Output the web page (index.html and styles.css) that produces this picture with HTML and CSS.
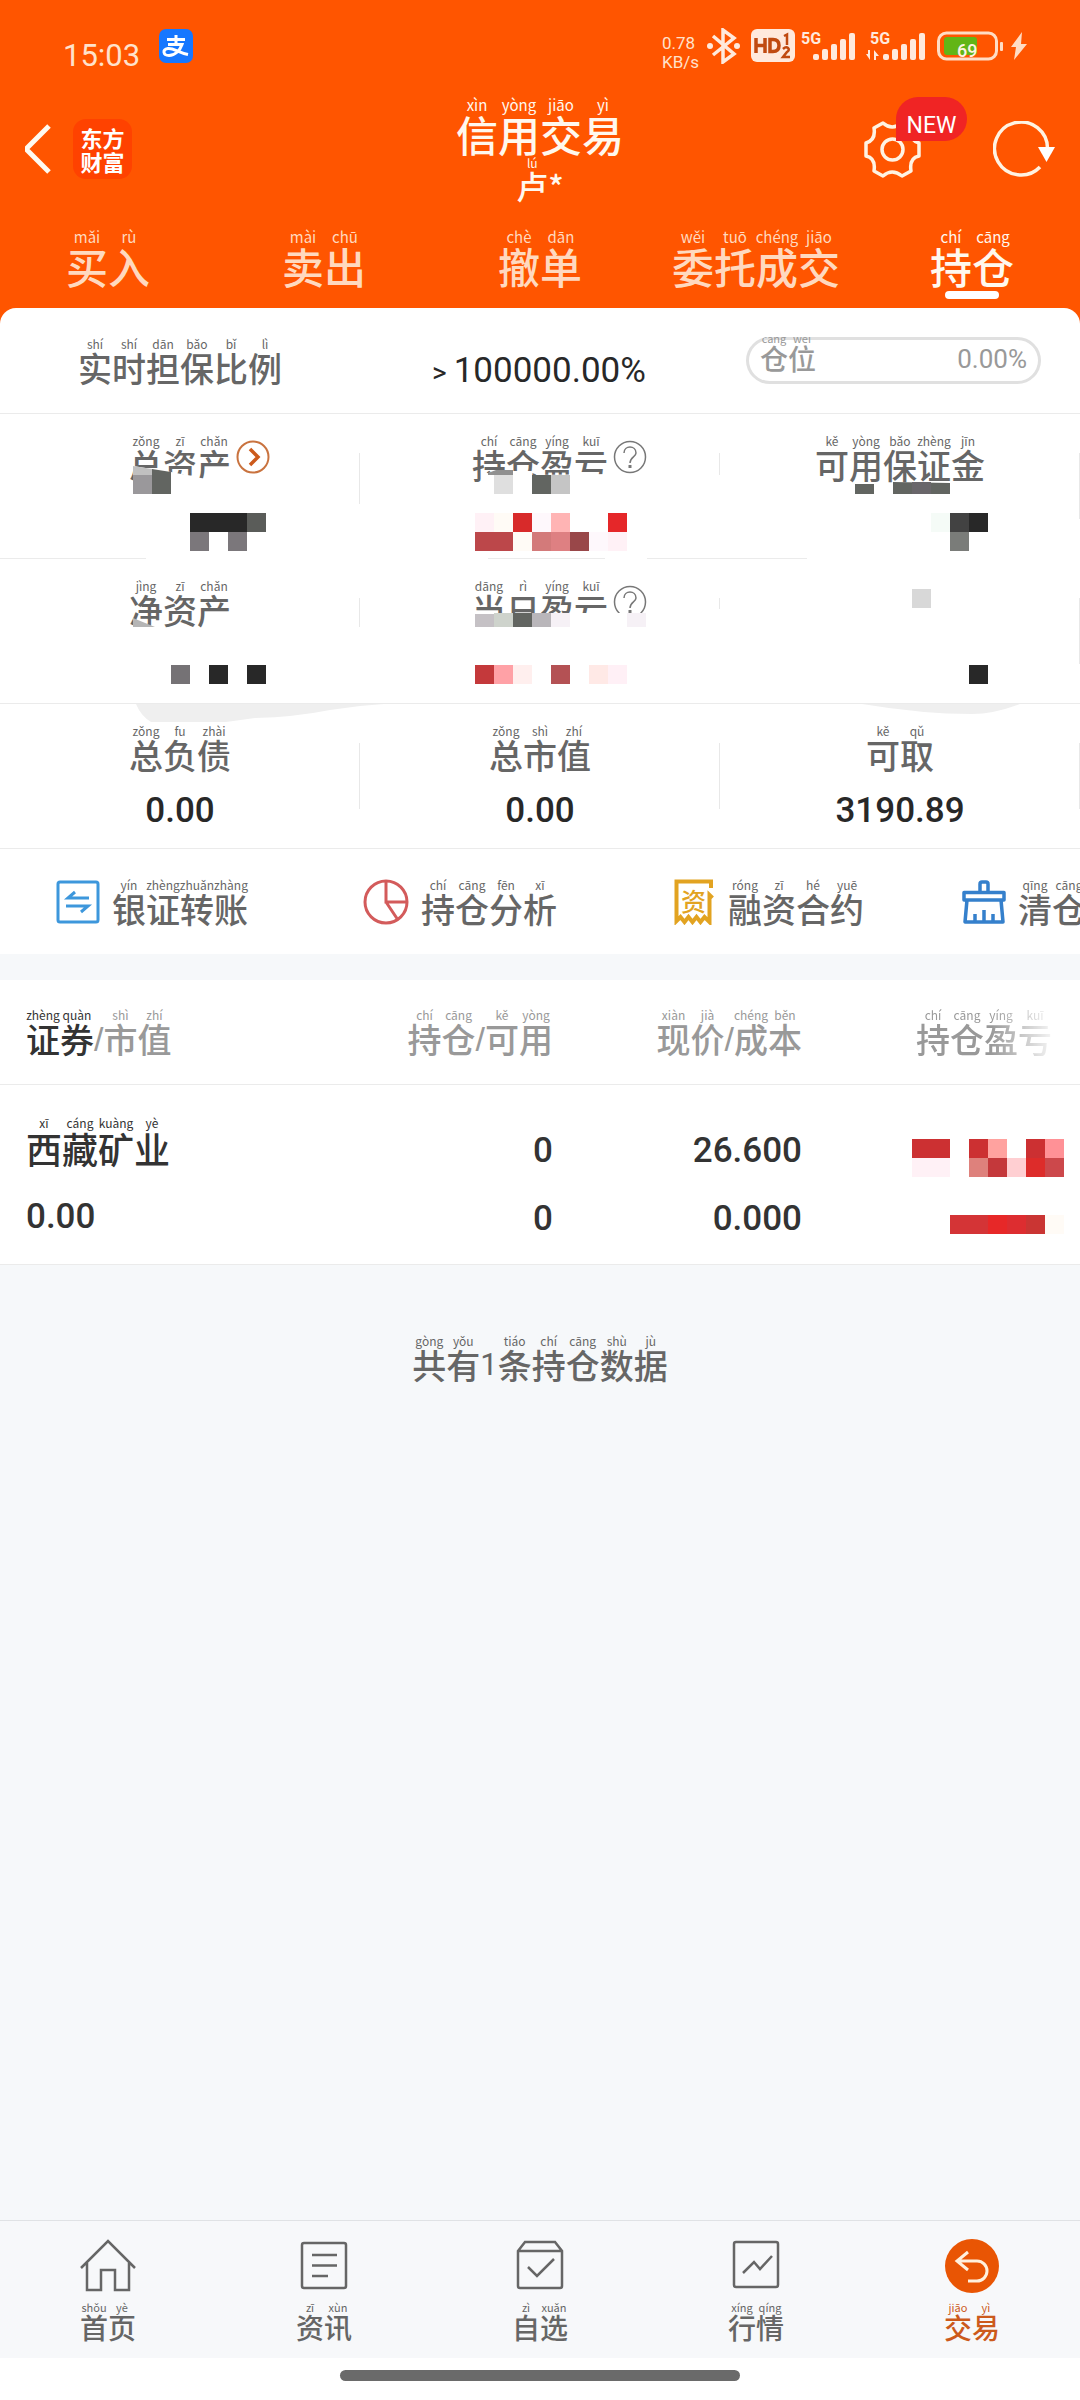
FILE: index.html
```html
<!DOCTYPE html>
<html lang="zh-CN">
<head>
<meta charset="utf-8">
<meta name="viewport" content="width=device-width, initial-scale=1">
<title>信用交易</title>
<link rel="stylesheet" href="styles.css">
</head>
<body>
<header class="top">
  <div class="status">
    <span class="clock">15:03</span>
    <svg class="alipay" width="34" height="34" viewBox="0 0 34 34"><rect width="34" height="34" rx="7" fill="#1677ff"/><g fill="none" stroke="#fff" stroke-width="3"><path d="M8 10.500h18M17 6v9M9 15.500h14c-2 6-7 11-13 11-6 0-7-6-1-7 6-.5 10 4 20 6"/></g></svg>
    <div class="status-icons">
      <span class="speed">0.78<br>KB/s</span>
      <svg width="39" height="36" viewBox="0 0 39 36"><g fill="none" stroke="#ffe9dc" stroke-width="3.500"><path d="M6 8l21 18-11 8V2l11 8L6 27"/></g><circle cx="3" cy="18" r="3" fill="#ffe9dc"/><circle cx="30" cy="18" r="3" fill="#ffe9dc"/></svg>
      <svg width="45" height="34" viewBox="0 0 45 34"><rect width="44" height="33" rx="6" fill="#ffe9dc"/><g fill="none" stroke="#c04a10" stroke-width="3.500"><path d="M5 9v15M14 9v15M5 16.500h9M19 10.500h3q6 0 6 6t-6 6h-3z"/></g><g fill="none" stroke="#c04a10" stroke-width="2.500"><path d="M33 7l3-1.500V16M32 20q3-3 5-1t-1 4l-4 5h7"/></g></svg>
      <svg width="60" height="32" viewBox="0 0 60 32" fill="#ffe9dc"><text x="0" y="14" class="net">5G</text><rect x="12" y="24" width="6" height="6" rx="2"/><rect x="21" y="19" width="6" height="11" rx="2"/><rect x="30" y="14" width="6" height="16" rx="2"/><rect x="39" y="9" width="6" height="21" rx="2"/><rect x="48" y="3" width="6" height="27" rx="2"/></svg>
      <svg width="66" height="32" viewBox="0 0 66 32" fill="#ffe9dc"><text x="4" y="14" class="net">5G</text><path d="M4 20v10L0 24h2v-4zM8 30V20l5 6h-3v4z"/><rect x="17" y="24" width="6" height="6" rx="2"/><rect x="26" y="19" width="6" height="11" rx="2"/><rect x="35" y="14" width="6" height="16" rx="2"/><rect x="44" y="9" width="6" height="21" rx="2"/><rect x="53" y="3" width="6" height="27" rx="2"/></svg>
      <svg width="68" height="30" viewBox="0 0 68 30"><rect x="1.500" y="2" width="58" height="26" rx="8" fill="none" stroke="#ffdcc4" stroke-width="3"/><rect x="7" y="6" width="33" height="18" rx="3" fill="#62b516"/><rect x="63" y="11" width="3" height="9" rx="1" fill="#ffdcc4"/><text x="20" y="26" class="charge">69</text></svg>
      <svg width="17" height="30" viewBox="0 0 17 30"><path d="M12 1L1 16h5L4 29l13-16h-6z" fill="#ffdcc4"/></svg>
    </div>
  </div>
  <div class="nav">
    <div class="nav-left">
      <button class="icon-btn" aria-label="返回"><svg width="27" height="50" viewBox="0 0 27 50"><path d="M24 2L1 25l23 23" fill="none" stroke="#fffaf0" stroke-width="5"/></svg></button>
      <span class="logo">东方<br>财富</span>
    </div>
    <div class="nav-title">
      <h1 class="py big">
        <ruby>信<rt>xìn</rt></ruby><ruby>用<rt>yòng</rt></ruby><ruby>交<rt>jiāo</rt></ruby><ruby>易<rt>yì</rt></ruby>
      </h1>
      <div class="py account"><ruby>卢<rt>lú</rt></ruby><span>*</span></div>
    </div>
    <div class="nav-right">
      <button class="icon-btn gear" aria-label="设置">
        <svg width="57" height="57" viewBox="0 0 57 57" fill="none" stroke="#fff3e2" stroke-width="3.500"><path d="M19 2Q28 10 38 2L47 7Q45 19 55 22V35Q45 37 47 50L38 55Q28 47 19 55L10 50Q12 37 2 35V22Q12 19 10 7Z" stroke-linejoin="round"/><circle cx="28.500" cy="28.500" r="10.500"/></svg>
        <span class="new">NEW</span>
      </button>
      <button class="icon-btn" aria-label="刷新"><svg width="62" height="57" viewBox="0 0 62 57"><path d="M54.500 28A26.500 26.500 0 1 0 47 46" fill="none" stroke="#fff3e2" stroke-width="3.500"/><path d="M45 26h17l-8.500 15z" fill="#fff"/></svg></button>
    </div>
  </div>
  <nav class="tabs">
    <a href="#buy" class="py big"><ruby>买<rt>mǎi</rt></ruby><ruby>入<rt>rù</rt></ruby></a>
    <a href="#sell" class="py big"><ruby>卖<rt>mài</rt></ruby><ruby>出<rt>chū</rt></ruby></a>
    <a href="#cancel" class="py big"><ruby>撤<rt>chè</rt></ruby><ruby>单<rt>dān</rt></ruby></a>
    <a href="#orders" class="py big"><ruby>委<rt>wěi</rt></ruby><ruby>托<rt>tuō</rt></ruby><ruby>成<rt>chéng</rt></ruby><ruby>交<rt>jiāo</rt></ruby></a>
    <a href="#hold" class="py big active"><ruby>持<rt>chí</rt></ruby><ruby>仓<rt>cāng</rt></ruby></a>
  </nav>
</header>

<main class="content">
  <section class="account-card">
    <div class="ratio-row">
      <div class="py"><ruby>实<rt>shí</rt></ruby><ruby>时<rt>shí</rt></ruby><ruby>担<rt>dān</rt></ruby><ruby>保<rt>bǎo</rt></ruby><ruby>比<rt>bǐ</rt></ruby><ruby>例<rt>lì</rt></ruby></div>
      <div class="ratio"><small>&gt;</small>100000.00%</div>
      <div class="pill"><div class="py small"><ruby>仓<rt>cāng</rt></ruby><ruby>位<rt>wèi</rt></ruby></div><span>0.00%</span></div>
    </div>
    <div class="grid">
      <div class="cell">
        <div class="py"><ruby>总<rt>zǒng</rt></ruby><ruby>资<rt>zī</rt></ruby><ruby>产<rt>chǎn</rt></ruby>
          <svg class="hint" width="34" height="34" viewBox="0 0 34 34" fill="none"><circle cx="17" cy="17" r="15.500" stroke="#c9733f" stroke-width="2"/><path d="M14 9l8 8-8 8" stroke="#cc5a1c" stroke-width="3.500"/></svg></div>
        <svg class="mask" viewBox="0 0 360 145" preserveAspectRatio="none"><path fill="#fff" d="M133 52l38 6 35 7v18h-73zM146 143h214v2H146zM356 90h4v18h-4z"/><path fill="#c0c0c0" d="M133 52l19 3v6h-19z"/><path fill="#9a989b" d="M133 61h19v19h-19z"/><path fill="#626561" d="M152 55l19 3v22h-19z"/><path fill="#282828" d="M190 99h57v19h-57z"/><path fill="#5a5c59" d="M247 99h19v19h-19z"/><path fill="#7b777b" d="M190 118h19v19h-19zM228 118h19v19h-19z"/></svg>
      </div>
      <div class="cell">
        <div class="py"><ruby>持<rt>chí</rt></ruby><ruby>仓<rt>cāng</rt></ruby><ruby>盈<rt>yíng</rt></ruby><ruby>亏<rt>kuī</rt></ruby>
          <svg class="hint" width="34" height="34" viewBox="0 0 34 34" fill="none" stroke="#777" stroke-width="1.500"><circle cx="17" cy="17" r="15.500"/><path d="M11 13c0-8 12-8 12 0 0 4-6 4-6 10"/><path d="M17 25v3" stroke-width="3"/></svg></div>
        <svg class="mask" viewBox="0 0 360 145" preserveAspectRatio="none"><path fill="#fff" d="M125 60l10-3h37v4l78-1v22H125zM0 143h128v2H0zM245 143h42v2h-42zM356 61h4v47h-4z"/><path fill="#909090" d="M128 59l8-3h17v5h-25z"/><path fill="#dfdfdf" d="M134 61h19v19h-19z"/><path fill="#626561" d="M172 61h19v19h-19z"/><path fill="#c5c5c5" d="M191 61h19v19h-19z"/><path fill="#fff1f6" d="M115 99h19v19h-19zM248 118h19v19h-19z"/><path fill="#fffbf6" d="M134 99h19v19h-19zM153 118h19v19h-19z"/><path fill="#d82a2a" d="M153 99h19v19h-19z"/><path fill="#fef8fc" d="M172 99h19v19h-19zM229 118h19v19h-19z"/><path fill="#ffb4b4" d="M191 99h19v19h-19z"/><path fill="#e52729" d="M248 99h19v19h-19z"/><path fill="#bc474a" d="M115 118h38v19h-38z"/><path fill="#d37a7a" d="M172 118h19v19h-19z"/><path fill="#de8082" d="M191 118h19v19h-19z"/><path fill="#994749" d="M210 118h19v19h-19z"/></svg>
      </div>
      <div class="cell">
        <div class="py"><ruby>可<rt>kě</rt></ruby><ruby>用<rt>yòng</rt></ruby><ruby>保<rt>bǎo</rt></ruby><ruby>证<rt>zhèng</rt></ruby><ruby>金<rt>jīn</rt></ruby></div>
        <svg class="mask" viewBox="0 0 360 145" preserveAspectRatio="none"><path fill="#fff" d="M87 143h273v2H87z"/><path fill="#626561" d="M135 70h19v10h-19zM173 68l57 1v11h-57z"/><path fill="#69666a" d="M192 68h19v12h-19z"/><path fill="#f5fbf7" d="M211 99h19v19h-19z"/><path fill="#424242" d="M230 99h19v19h-19z"/><path fill="#282828" d="M249 99h19v19h-19z"/><path fill="#7a7c79" d="M230 118h19v19h-19z"/></svg>
      </div>
      <div class="cell">
        <div class="py"><ruby>净<rt>jìng</rt></ruby><ruby>资<rt>zī</rt></ruby><ruby>产<rt>chǎn</rt></ruby></div>
        <svg class="mask" viewBox="0 0 360 145" preserveAspectRatio="none"><path fill="#fff" d="M356 68h4v40h-4z"/><path fill="#b5b5b5" d="M133 59l22 9h-22z"/><path fill="#757275" d="M171 106h19v19h-19z"/><path fill="#282828" d="M209 106h19v19h-19zM247 106h19v19h-19z"/></svg>
      </div>
      <div class="cell">
        <div class="py"><ruby>当<rt>dāng</rt></ruby><ruby>日<rt>rì</rt></ruby><ruby>盈<rt>yíng</rt></ruby><ruby>亏<rt>kuī</rt></ruby>
          <svg class="hint" width="34" height="34" viewBox="0 0 34 34" fill="none" stroke="#777" stroke-width="1.500"><circle cx="17" cy="17" r="15.500"/><path d="M11 13c0-8 12-8 12 0 0 4-6 4-6 10"/><path d="M17 25v3" stroke-width="3"/></svg></div>
        <svg class="mask" viewBox="0 0 360 145" preserveAspectRatio="none"><path fill="#fff" d="M105 54h190v20H105zM356 50h4v58h-4z"/><path fill="#c5c1c5" d="M115 55h19v13h-19z"/><path fill="#ced3cc" d="M134 54h19v14h-19z"/><path fill="#626561" d="M153 54h19v14h-19z"/><path fill="#b9b6ba" d="M172 54h19v14h-19z"/><path fill="#f6f1f6" d="M191 54h19v14h-19zM267 54h19v14h-19z"/><path fill="#c4393b" d="M115 106h19v19h-19z"/><path fill="#ffa1a6" d="M134 106h19v19h-19z"/><path fill="#ffefee" d="M153 106h19v19h-19z"/><path fill="#b45154" d="M191 106h19v19h-19z"/><path fill="#ffe9e6" d="M229 106h19v19h-19z"/><path fill="#fff0f6" d="M248 106h19v19h-19z"/></svg>
      </div>
      <div class="cell">
        <svg class="mask" viewBox="0 0 360 145" preserveAspectRatio="none"><path fill="#d8d8d8" d="M192 30h19v19h-19z"/><path fill="#282828" d="M249 106h19v19h-19z"/></svg>
      </div>
      <div class="cell">
        <svg class="mask" viewBox="0 0 360 145" preserveAspectRatio="none"><path fill="#efefef" d="M136 0q5 12 15 18h75l29-4q40-1 75-8l30-4V0z"/></svg>
        <div class="py"><ruby>总<rt>zǒng</rt></ruby><ruby>负<rt>fu</rt></ruby><ruby>债<rt>zhài</rt></ruby></div>
        <strong>0.00</strong>
      </div>
      <div class="cell">
        <svg class="mask" viewBox="0 0 360 145" preserveAspectRatio="none"><path fill="#efefef" d="M0 0h24L0 2z"/></svg>
        <div class="py"><ruby>总<rt>zǒng</rt></ruby><ruby>市<rt>shì</rt></ruby><ruby>值<rt>zhí</rt></ruby></div>
        <strong>0.00</strong>
      </div>
      <div class="cell">
        <svg class="mask" viewBox="0 0 360 145" preserveAspectRatio="none"><path fill="#efefef" d="M142 0q60 10 110 10 22 0 48-10z"/></svg>
        <div class="py"><ruby>可<rt>kě</rt></ruby><ruby>取<rt>qǔ</rt></ruby></div>
        <strong>3190.89</strong>
      </div>
    </div>
    <nav class="tools">
      <a href="#transfer"><svg width="44" height="46" viewBox="0 0 44 46" fill="none" stroke="#3d97dc" stroke-width="3"><rect x="2" y="3" width="40" height="40" rx="2"/><path d="M33 19H12l7-6M10 27h22l-7 6"/></svg>
        <span class="py"><ruby>银<rt>yín</rt></ruby><ruby>证<rt>zhèng</rt></ruby><ruby>转<rt>zhuǎn</rt></ruby><ruby>账<rt>zhàng</rt></ruby></span></a>
      <a href="#analysis"><svg width="46" height="46" viewBox="0 0 46 46" fill="none" stroke="#d35b5b" stroke-width="3"><circle cx="23" cy="23" r="21"/><path d="M23 2v21h21M23 23l12 18"/></svg>
        <span class="py"><ruby>持<rt>chí</rt></ruby><ruby>仓<rt>cāng</rt></ruby><ruby>分<rt>fēn</rt></ruby><ruby>析<rt>xī</rt></ruby></span></a>
      <a href="#contract"><svg width="44" height="46" viewBox="0 0 44 46"><path d="M39 9V2.500H4.500V42l4-4 4 5 4-5 4 5 4-5 4 5 4-5 5 5V16l3 3" fill="none" stroke="#e2a321" stroke-width="4"/><text x="9" y="32" class="doc">资</text></svg>
        <span class="py"><ruby>融<rt>róng</rt></ruby><ruby>资<rt>zī</rt></ruby><ruby>合<rt>hé</rt></ruby><ruby>约<rt>yuē</rt></ruby></span></a>
      <a href="#cleared" class="last"><svg width="44" height="46" viewBox="0 0 44 46" fill="none" stroke="#3580cc" stroke-width="3.500"><path d="M18 13V5q0-2 2-2h4q2 0 2 2v8M2 13.500h40V21H2zM5 21L3 43h38l-2-22M13 43v-8M22 43V31M31 43v-8" stroke-linejoin="round"/></svg>
        <span class="py"><ruby>清<rt>qīng</rt></ruby><ruby>仓<rt>cāng</rt></ruby></span></a>
    </nav>
  </section>

  <table class="holdings">
    <colgroup><col><col class="c2"><col class="c3"><col class="c4"></colgroup>
    <thead>
      <tr>
        <th><span class="py"><b><ruby>证<rt>zhèng</rt></ruby><ruby>券<rt>quàn</rt></ruby></b><i>/</i><ruby>市<rt>shì</rt></ruby><ruby>值<rt>zhí</rt></ruby></span></th>
        <th><span class="py"><ruby>持<rt>chí</rt></ruby><ruby>仓<rt>cāng</rt></ruby><i>/</i><ruby>可<rt>kě</rt></ruby><ruby>用<rt>yòng</rt></ruby></span></th>
        <th><span class="py"><ruby>现<rt>xiàn</rt></ruby><ruby>价<rt>jià</rt></ruby><i>/</i><ruby>成<rt>chéng</rt></ruby><ruby>本<rt>běn</rt></ruby></span></th>
        <th><span class="py fade"><ruby>持<rt>chí</rt></ruby><ruby>仓<rt>cāng</rt></ruby><ruby>盈<rt>yíng</rt></ruby><ruby>亏<rt>kuī</rt></ruby></span></th>
      </tr>
    </thead>
    <tbody>
      <tr>
        <td><div class="py name"><ruby>西<rt>xī</rt></ruby><ruby>藏<rt>cáng</rt></ruby><ruby>矿<rt>kuàng</rt></ruby><ruby>业<rt>yè</rt></ruby></div><div class="num">0.00</div></td>
        <td><div class="num">0</div><div class="num">0</div></td>
        <td><div class="num">26.600</div><div class="num">0.000</div></td>
        <td><svg class="profit" width="152" height="96" viewBox="0 0 152 96"><path fill="#cc3032" d="M0 0h38v19H0zM57 0h19v19H57zM114 0h19v19h-19z"/><path fill="#ffa29f" d="M76 0h19v19H76z"/><path fill="#ff9196" d="M133 0h19v19h-19z"/><path fill="#fff1f6" d="M0 19h38v19H0z"/><path fill="#de817c" d="M57 19h19v19H57z"/><path fill="#c4383b" d="M76 19h19v19H76z"/><path fill="#ffcfd2" d="M95 19h19v19H95z"/><path fill="#dd2c2a" d="M114 19h19v19h-19z"/><path fill="#cc484b" d="M133 19h19v19h-19z"/><path fill="#d43436" d="M38 76h38v19H38z"/><path fill="#e72828" d="M76 76h19v19H76z"/><path fill="#dd2d30" d="M95 76h19v19H95z"/><path fill="#ca3533" d="M114 76h19v19h-19z"/><path fill="#fffbf6" d="M133 76h19v19h-19z"/></svg></td>
      </tr>
    </tbody>
  </table>
  <p class="py total"><ruby>共<rt>gòng</rt></ruby><ruby>有<rt>yǒu</rt></ruby><span>1</span><ruby>条<rt>tiáo</rt></ruby><ruby>持<rt>chí</rt></ruby><ruby>仓<rt>cāng</rt></ruby><ruby>数<rt>shù</rt></ruby><ruby>据<rt>jù</rt></ruby></p>
</main>

<nav class="tabbar">
  <a href="#home"><svg width="56" height="56" viewBox="0 0 56 56" fill="none" stroke="#666" stroke-width="2.500"><path d="M1 30L28 3l27 27M7 25v27h14V32h14v20h14V25"/></svg><span class="py small"><ruby>首<rt>shǒu</rt></ruby><ruby>页<rt>yè</rt></ruby></span></a>
  <a href="#news"><svg width="56" height="56" viewBox="0 0 56 56" fill="none" stroke="#666" stroke-width="2.500"><rect x="6" y="5" width="44" height="45" rx="2"/><path d="M16 17h25M16 27.500h25M16 38h16"/></svg><span class="py small"><ruby>资<rt>zī</rt></ruby><ruby>讯<rt>xùn</rt></ruby></span></a>
  <a href="#watch"><svg width="56" height="56" viewBox="0 0 56 56" fill="none" stroke="#666" stroke-width="2.500"><path d="M6 13l7-9h30l7 9v35q0 2-2 2H8q-2 0-2-2zM6 13h44M16 29l9 9 17-17"/></svg><span class="py small"><ruby>自<rt>zì</rt></ruby><ruby>选<rt>xuǎn</rt></ruby></span></a>
  <a href="#market"><svg width="56" height="56" viewBox="0 0 56 56" fill="none" stroke="#666" stroke-width="2.500"><rect x="6" y="4" width="44" height="45" rx="2"/><path d="M15 35l11-11 6 7 12-13"/></svg><span class="py small"><ruby>行<rt>xíng</rt></ruby><ruby>情<rt>qíng</rt></ruby></span></a>
  <a href="#trade" class="active"><svg width="56" height="56" viewBox="0 0 56 56" fill="none"><circle cx="28" cy="28" r="27" fill="#e95504"/><path d="M24 14l-11 9 11 9M13 23h20a10 10 0 0 1 0 20h-9" stroke="#fff0dc" stroke-width="3"/></svg><span class="py small"><ruby>交<rt>jiāo</rt></ruby><ruby>易<rt>yì</rt></ruby></span></a>
</nav>
<footer class="gesture"><span></span></footer>
</body>
</html>
```
FILE: styles.css
```css
* { box-sizing: border-box; }

body {
  margin: 0;
  min-height: 100vh;
  display: flex;
  flex-direction: column;
  background: #f6f8fa;
  color: #666;
  font-family: Roboto, "Noto Sans CJK SC", sans-serif;
  overflow-x: hidden;
}

a { color: inherit; text-decoration: none; }

/* Characters with pinyin above */
.py {
  display: inline-flex;
  align-items: flex-end;
  font-family: "Noto Sans CJK SC", sans-serif;
  font-size: 34px;
  line-height: 34px;
  font-weight: 500;
  margin: 0;
  white-space: nowrap;
}
.py b { display: inline-flex; color: #333; font-weight: 500; }
.py i { font-style: normal; font-family: "Liberation Sans", sans-serif; }
.py ruby {
  display: inline-flex;
  flex-direction: column-reverse;
  align-items: center;
  width: 1em;
}
.py rt {
  display: block;
  font-size: 12px;
  line-height: 14px;
  font-weight: 400;
}
.py.big { font-size: 42px; line-height: 42px; }
.py.big rt { font-size: 15px; line-height: 16px; }
.py.small { font-size: 28px; line-height: 28px; }
.py.small rt { font-size: 11px; line-height: 12px; }

/* Header */
.top { background: #ff5500; color: #fff8ee; padding-bottom: 25px; }

.status {
  height: 92px;
  padding: 0 53px 0 63px;
  display: flex;
  align-items: center;
}
.clock { font-size: 31px; line-height: 31px; margin: 18px 19px 0 0; color: #ffe2cc; }
.status-icons { margin-left: auto; display: flex; align-items: center; gap: 5px; }
.speed { width: 40px; font-size: 17px; line-height: 19px; color: #ffe2cc; padding-top: 14px; }
.net { font: 700 16px Roboto, sans-serif; }
.charge { font: 500 18px Roboto, sans-serif; fill: #fff3e0; }

.nav {
  display: grid;
  grid-template-columns: 1fr auto 1fr;
  align-items: center;
  padding: 5px 25px 0;
}
.nav-left { display: flex; align-items: center; gap: 21px; }
.nav-right { display: flex; justify-content: flex-end; gap: 72px; }
.nav-title { display: flex; flex-direction: column; align-items: center; gap: 2px; }
.account { font-size: 32px; line-height: 32px; }
.account rt { line-height: 12px; }
.icon-btn { position: relative; display: block; padding: 0; border: 0; background: none; font: inherit; }
.icon-btn svg { display: block; }
.logo {
  width: 59px;
  height: 60px;
  padding: 6px 0;
  border-radius: 13px;
  background: #ff4200;
  color: #fff;
  text-align: center;
  font: 700 22px/24px "Noto Sans CJK SC", sans-serif;
}
.new {
  position: absolute;
  left: 32px;
  top: -24px;
  width: 71px;
  height: 44px;
  padding-top: 8px;
  border-radius: 22px 22px 22px 0;
  background: #f02424;
  color: #fff;
  font-size: 23px;
  line-height: 42px;
}

.tabs { display: grid; grid-template-columns: repeat(5, 1fr); padding-top: 28px; }
.tabs a { justify-content: center; color: #ffd9bf; padding-bottom: 12px; position: relative; }
.tabs .active { color: #fff8ee; }
.tabs .active::after {
  content: "";
  position: absolute;
  bottom: 0;
  width: 54px;
  height: 8px;
  border-radius: 4px;
  background: #fff;
}

/* Account figures */
.content { flex: 1; display: flex; flex-direction: column; }
.account-card { margin-top: -16px; border-radius: 16px 16px 0 0; background: #fff; }
.ratio-row {
  height: 106px;
  padding: 29px 39px 0 78px;
  display: flex;
  align-items: flex-start;
  border-bottom: 1px solid #ebebeb;
}
.ratio {
  margin: 16px 0 0 150px;
  display: flex;
  align-items: baseline;
  gap: 7px;
  color: #282828;
  font-size: 35px;
  line-height: 36px;
}
.ratio small { font-size: 28px; }
.pill {
  margin-left: auto;
  width: 295px;
  height: 47px;
  padding: 0 14px 12px;
  display: flex;
  justify-content: space-between;
  align-items: flex-end;
  overflow: hidden;
  border-radius: 24px;
  box-shadow: inset 0 0 0 3px #e0e0e0;
  color: #999;
  font-size: 26px;
  line-height: 26px;
}

.grid { display: grid; grid-template-columns: repeat(3, 1fr); }
.cell {
  position: relative;
  height: 145px;
  padding-top: 20px;
  display: flex;
  flex-direction: column;
  align-items: center;
  gap: 21px;
  border-bottom: 1px solid #ebebeb;
}
.cell::before {
  content: "";
  position: absolute;
  right: 0;
  top: 39px;
  width: 1px;
  height: 66px;
  background: #e8e8e8;
}
.cell .py { position: relative; }
.cell strong { color: #282828; font-size: 35px; line-height: 36px; font-weight: 500; }
.hint { position: absolute; left: 100%; top: 6px; margin-left: 5px; }
.mask { position: absolute; left: 0; top: 0; width: 100%; height: 145px; }

.tools { display: grid; grid-template-columns: repeat(4, 308px); height: 105px; overflow: hidden; }
.tools a { display: flex; align-items: center; justify-content: center; gap: 12px; padding-right: 4px; }
.tools .last { justify-content: flex-start; padding-left: 38px; }
.doc { font: 500 25px "Noto Sans CJK SC", sans-serif; fill: #e2a321; }

/* Holdings */
.holdings {
  width: 100%;
  margin-top: 26px;
  border-collapse: separate;
  border-spacing: 0;
  table-layout: fixed;
  background: #fff;
}
.c2 { width: 228px; }
.c3 { width: 249px; }
.c4 { width: 278px; }
.holdings th, .holdings td {
  padding: 0;
  text-align: right;
  vertical-align: top;
  border-bottom: 1px solid #ebebeb;
}
.holdings th { padding: 28px 0; line-height: 0; color: #999; font-weight: 400; }
.holdings th:first-child, .holdings td:first-child { padding-left: 26px; text-align: left; }
.holdings th:last-child { padding-right: 28px; }
.holdings td { padding: 48px 0 27px; color: #333; }
.holdings td:first-child { padding-top: 31px; }
.fade { -webkit-mask-image: linear-gradient(90deg, #000 55%, transparent 105%); mask-image: linear-gradient(90deg, #000 55%, transparent 105%); }
.py.name { display: flex; font-size: 36px; line-height: 36px; color: #333; }
.num { font-size: 35px; line-height: 36px; font-weight: 500; }
.num + .num { margin-top: 32px; }
.name + .num { margin-top: 33px; }
.profit { display: block; margin: 6px 16px 0 auto; }

.total { align-self: center; margin-top: 69px; }
.total span { font-size: 31px; font-family: Roboto, sans-serif; font-weight: 400; }

/* Bottom navigation */
.tabbar {
  display: grid;
  grid-template-columns: repeat(5, 1fr);
  height: 138px;
  padding-top: 17px;
  border-top: 1px solid #e0e2e5;
  background: #f7f8fa;
}
.tabbar a { display: flex; flex-direction: column; align-items: center; gap: 7px; }
.tabbar .active { color: #cc5a1c; }
.gesture { height: 42px; padding-top: 12px; background: #fff; }
.gesture span { display: block; width: 37%; height: 11px; margin: 0 auto; border-radius: 6px; background: #6a6a6a; }
```
